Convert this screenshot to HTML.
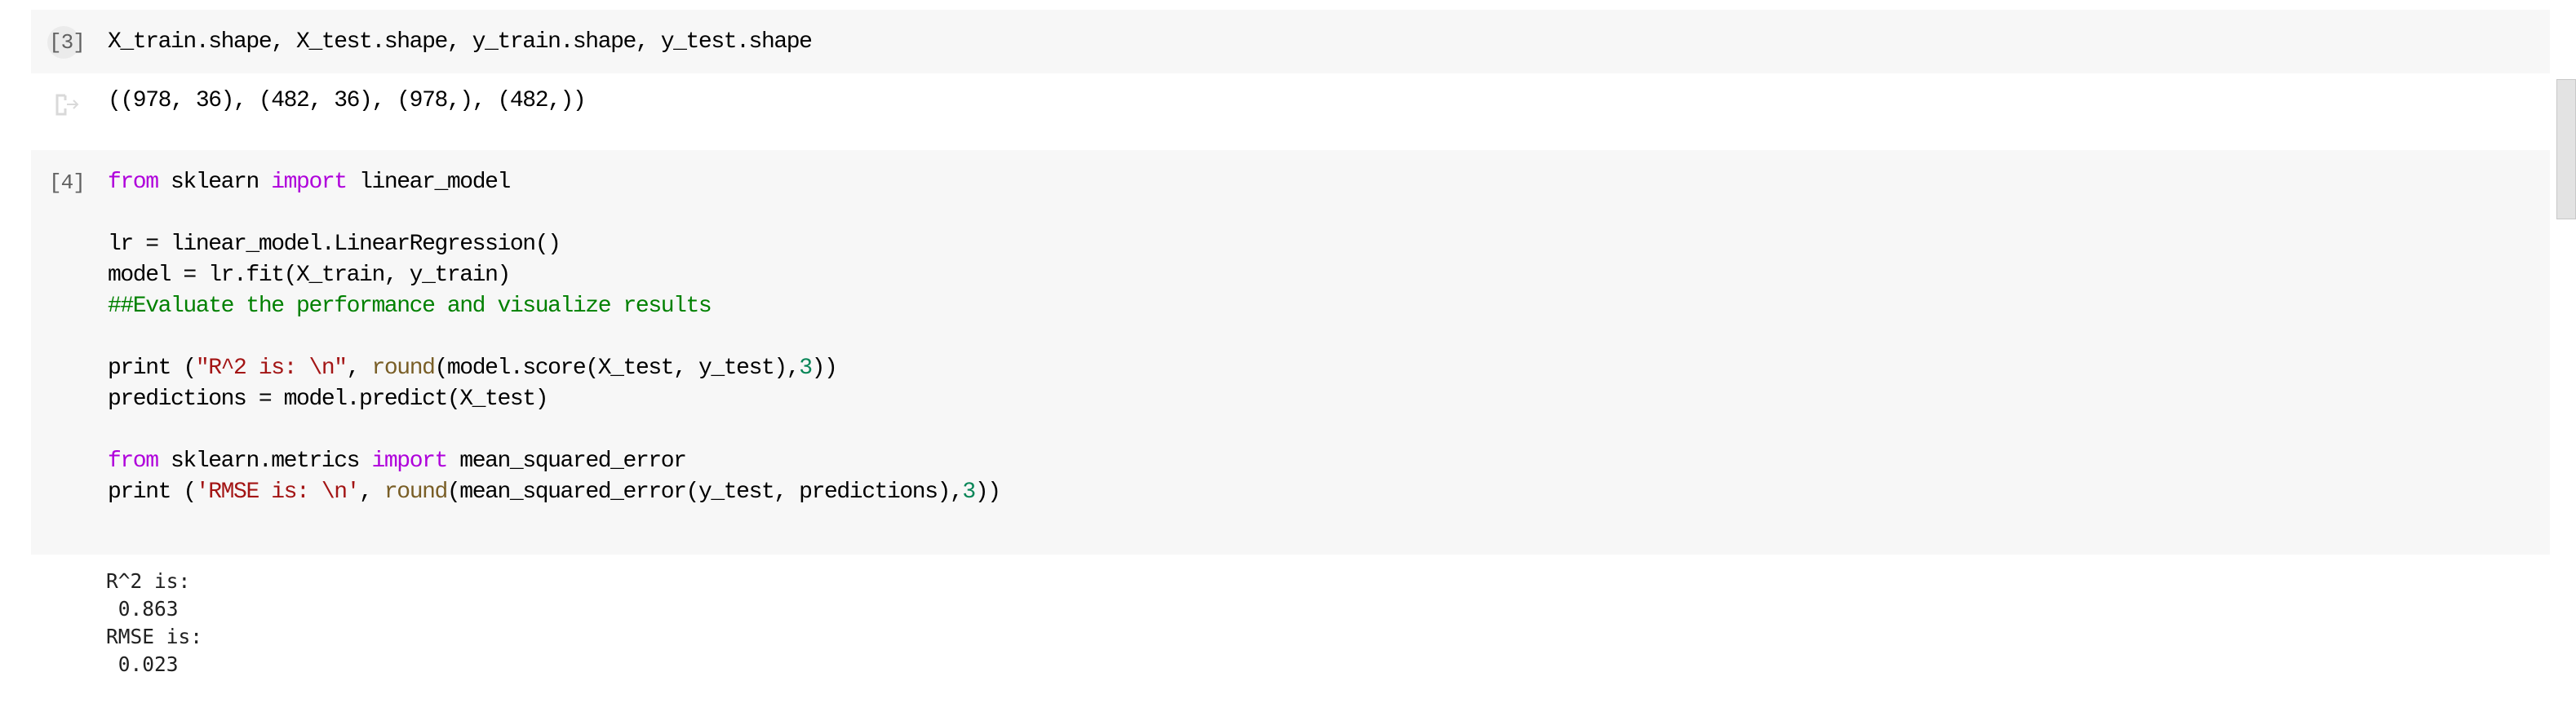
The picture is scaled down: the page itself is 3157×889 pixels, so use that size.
<!DOCTYPE html>
<html><head><meta charset="utf-8"><style>
html,body{margin:0;padding:0;background:#fff;width:3157px;height:889px;overflow:hidden;position:relative}
.cell{position:absolute;left:38px;width:3087px;background:#f7f7f7}
.code{position:absolute;left:132px;font-family:"Liberation Mono",monospace;font-size:28px;letter-spacing:-1.4px;color:#000;white-space:pre;line-height:38px}
.p{position:absolute;font-family:"Liberation Mono",monospace;font-size:26px;color:#616161;white-space:pre;letter-spacing:-1px}
.out{position:absolute;left:130px;font-family:"DejaVu Sans Mono","Liberation Mono",monospace;font-size:24.5px;color:#212121;white-space:pre;line-height:34px}
.k{color:#af00db}.s{color:#a31515}.f{color:#795e26}.n{color:#098658}.c{color:#008000}
</style></head><body>
<div class="cell" style="top:12px;height:78px"></div>
<div style="position:absolute;left:58px;top:32px;width:40px;height:40px;border-radius:50%;background:#ebebeb"></div>
<div class="p" style="left:60px;top:33px;line-height:38px">[3]</div>
<div class="code" style="top:33px">X_train.shape, X_test.shape, y_train.shape, y_test.shape</div>

<svg style="position:absolute;left:68px;top:115px" width="30" height="27" viewBox="0 0 30 27">
<path d="M12 2H2V25H12V18" fill="none" stroke="#d9d9d9" stroke-width="3"/>
<path d="M12 2V8" fill="none" stroke="#d9d9d9" stroke-width="3"/>
<path d="M14 13H27M22 8L27 13L22 18" fill="none" stroke="#d9d9d9" stroke-width="2"/>
</svg>
<div class="code" style="top:105px">((978, 36), (482, 36), (978,), (482,))</div>

<div class="cell" style="top:184px;height:496px"></div>
<div class="p" style="left:60px;top:205px;line-height:38px">[4]</div>
<div class="code" style="top:205px"><span class="k">from</span> sklearn <span class="k">import</span> linear_model

lr = linear_model.LinearRegression()
model = lr.fit(X_train, y_train)
<span class="c">##Evaluate the performance and visualize results</span>

print (<span class="s">"R^2 is: \n"</span>, <span class="f">round</span>(model.score(X_test, y_test),<span class="n">3</span>))
predictions = model.predict(X_test)

<span class="k">from</span> sklearn.metrics <span class="k">import</span> mean_squared_error
print (<span class="s">'RMSE is: \n'</span>, <span class="f">round</span>(mean_squared_error(y_test, predictions),<span class="n">3</span>))</div>

<div class="out" style="top:696px">R^2 is: 
 0.863
RMSE is: 
 0.023</div>

<div style="position:absolute;left:3133px;top:97px;width:22px;height:170px;background:#e3e3e3;border:1px solid #c8c8c8"></div>
</body></html>
